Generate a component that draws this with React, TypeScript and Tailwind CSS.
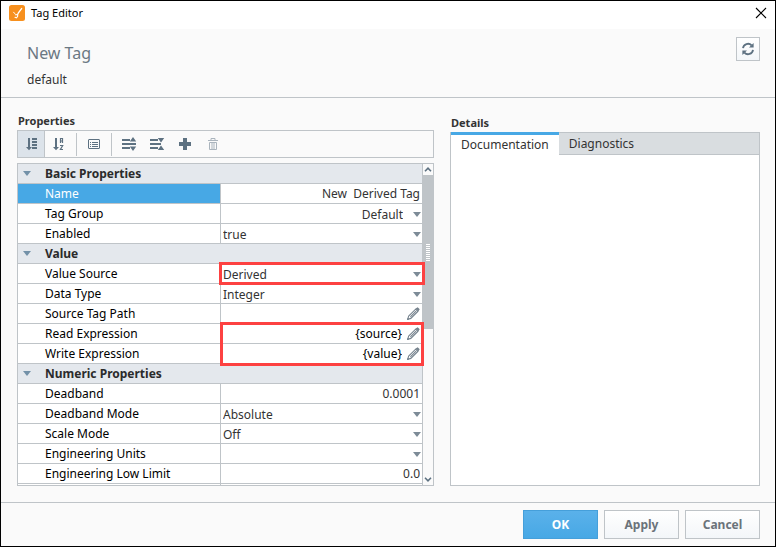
import React, { useState } from "react";
import clsx from "clsx";

type Kind = "text" | "select" | "expression";

interface Property {
  label: string;
  value: string;
  kind: Kind;
  alignRight?: boolean;
  highlight?: "single" | "double"; // number of rows the red frame covers
}

interface Section {
  title: string;
  properties: Property[];
}

const sections: Section[] = [
  {
    title: "Basic Properties",
    properties: [
      { label: "Name", value: "New  Derived Tag", kind: "text" },
      { label: "Tag Group", value: "Default", kind: "select", alignRight: true },
      { label: "Enabled", value: "true", kind: "select" },
    ],
  },
  {
    title: "Value",
    properties: [
      { label: "Value Source", value: "Derived", kind: "select", highlight: "single" },
      { label: "Data Type", value: "Integer", kind: "select" },
      { label: "Source Tag Path", value: "", kind: "expression" },
      { label: "Read Expression", value: "{source}", kind: "expression", highlight: "double" },
      { label: "Write Expression", value: "{value}", kind: "expression" },
    ],
  },
  {
    title: "Numeric Properties",
    properties: [
      { label: "Deadband", value: "0.0001", kind: "text" },
      { label: "Deadband Mode", value: "Absolute", kind: "select" },
      { label: "Scale Mode", value: "Off", kind: "select" },
      { label: "Engineering Units", value: "", kind: "select" },
      { label: "Engineering Low Limit", value: "0.0", kind: "text" },
    ],
  },
];

function Logo() {
  return (
    <svg width="16" height="16" viewBox="0 0 16 16" fill="none" stroke="#fff" strokeLinecap="round">
      <rect width="16" height="16" rx="2.5" fill="#f7901e" stroke="none" />
      <path d="M12.6 3.6 9.2 8.2" strokeWidth="1.4" />
      <path d="M9.2 8.2 8.2 9.6" strokeWidth="0.8" />
      <path d="M4.6 7.2 5.8 8.6" strokeWidth="1" />
      <path d="M6.4 9.8 8.8 9.6 8.6 11.6 7.4 12.8 6 12.2" strokeWidth="1.1" />
    </svg>
  );
}

function RefreshIcon() {
  return (
    <svg width="14" height="14" viewBox="0 0 14 14" fill="none" stroke="#5d7181" strokeWidth="1.8">
      <path d="M2 6.2A5 5 0 0 1 10.6 3.4" />
      <path d="M12 7.8A5 5 0 0 1 3.4 10.6" />
      <path d="M12.6 1v4.6H8z" fill="#5d7181" stroke="none" />
      <path d="M1.4 13V8.4H6z" fill="#5d7181" stroke="none" />
    </svg>
  );
}

function SortCategoryIcon() {
  return (
    <svg width="14" height="14" viewBox="0 0 14 14" fill="#5d7181">
      <path d="M4 1h2v9h2L5 13.2 2 10h2z" />
      <path d="M8 1h5v2H8zM8 4h5v2H8zM8 7h5v2H8zM8 10h5v2H8z" />
    </svg>
  );
}

function SortAlphaIcon() {
  return (
    <svg width="14" height="14" viewBox="0 0 14 14" fill="none" stroke="#5d7181">
      <path d="M3 1h2v9h2L4 13.2 1 10h2z" fill="#5d7181" stroke="none" />
      <path d="M8.5 6V1.5h2V6M8.5 4h2M8 8.5h2.7L8.4 12.5H11" strokeWidth="1.2" />
    </svg>
  );
}

function DescriptionIcon() {
  return (
    <svg width="12" height="12" viewBox="0 0 12 12" fill="none" stroke="#5d7181">
      <rect x="0.5" y="1.5" width="11" height="9" rx="0.5" />
      <path d="M2 4.5h1M4 4.5h6M2 6.5h1M4 6.5h6M2 8.5h1M4 8.5h6" />
    </svg>
  );
}

function ExpandIcon() {
  return (
    <svg width="16" height="14" viewBox="0 0 16 14" fill="#5d7181">
      <path d="M1 2h8v2H1zM1 6h14v2H1zM1 10h8v2H1z" />
      <path d="M12 0 15.2 4.5H8.8zM12 14 8.8 9.5h6.4z" />
    </svg>
  );
}

function CollapseIcon() {
  return (
    <svg width="16" height="14" viewBox="0 0 16 14" fill="#5d7181">
      <path d="M1 2h8v2H1zM1 6h11v2H1zM1 10h8v2H1z" />
      <path d="M12 5.5 8.8 1h6.4zM12 8.5 15.2 13H8.8z" />
    </svg>
  );
}

function PlusIcon() {
  return (
    <svg width="12" height="12" viewBox="0 0 12 12" fill="#5d7181">
      <path d="M4 0h4v4h4v4H8v4H4V8H0V4h4z" />
    </svg>
  );
}

function TrashIcon() {
  return (
    <svg width="12" height="14" viewBox="0 0 12 14" fill="none" stroke="#aab4bd">
      <path d="M1 3.5h10M4 3V1.5h4V3M2.5 5.5h7v7h-7zM5 6v6M7 6v6" />
    </svg>
  );
}

function PencilIcon() {
  return (
    <svg width="14" height="14" viewBox="0 0 14 14" fill="none" stroke="#74818c" strokeWidth="1.1">
      <path d="M2.6 9.2 9.6 2.2 11.8 4.4 4.8 11.4 1.8 12.2Z" />
      <path d="M4.4 9.8 10 4.2" />
      <path d="M10.4 1.8 11.6 1 13 2.4 12.2 3.6Z" fill="#74818c" />
      <path d="M1 13 1.6 10.8 3.2 12.4Z" fill="#74818c" stroke="none" />
    </svg>
  );
}

function ArrowDown({ className }: { className: string }) {
  return (
    <svg width="8" height="5" viewBox="0 0 8 5" className={className}>
      <path d="M0 0h8L4 5z" fill="currentColor" />
    </svg>
  );
}

function ToolButton({ label, active, disabled, children }: { label: string; active?: boolean; disabled?: boolean; children: React.ReactNode }) {
  return (
    <button
      type="button"
      aria-label={label}
      disabled={disabled}
      className={clsx("flex h-full items-center justify-center", active ? "w-[27px] border-r border-[#bfc4c8] bg-[#dce3ea]" : "w-7")}
    >
      {children}
    </button>
  );
}

function ValueCell({ property }: { property: Property }) {
  const { label, value, kind, alignRight, highlight } = property;
  const [current, setCurrent] = useState(value);

  return (
    <div className="relative flex h-full items-center">
      {kind === "select" ? (
        <>
          <select
            aria-label={label}
            value={current}
            onChange={(e) => setCurrent(e.target.value)}
            className={clsx("h-full w-full appearance-none pt-0.5 pl-0.5 text-[#333]", alignRight ? "pr-[19px] text-right" : "pr-4")}
          >
            <option value={value}>{value}</option>
          </select>
          <ArrowDown className="pointer-events-none absolute right-px mt-0.5 text-[#7d8b97]" />
        </>
      ) : (
        <input
          aria-label={label}
          value={current}
          onChange={(e) => setCurrent(e.target.value)}
          className={clsx("h-full w-full min-w-0 text-right", kind === "text" ? "pr-0.5 text-[#333]" : "pr-1 text-black")}
        />
      )}
      {kind === "expression" && (
        <button type="button" aria-label={`Edit ${label}`} className="mr-0.5 shrink-0">
          <PencilIcon />
        </button>
      )}
      {highlight && (
        <div
          className={clsx(
            "pointer-events-none absolute z-10 border-3 border-[#fd4141]",
            highlight === "single" ? "-top-0.5 -right-[3px] -bottom-0.5 -left-0.5" : "-top-0.5 -right-0.5 -bottom-[23px] -left-px"
          )}
        />
      )}
    </div>
  );
}

function PropertyTable() {
  const [selected, setSelected] = useState("Name");

  return (
    <table className="w-full table-fixed border-separate border-spacing-0 self-start">
      <colgroup>
        <col />
        <col className="w-[202px]" />
      </colgroup>
      {sections.map((section) => (
        <tbody key={section.title}>
          <tr className="h-5">
            <th colSpan={2} className="h-5 border-r border-b border-[#bfc4c8] bg-[#e4e8ed] p-0 text-left text-[#2b2b2b]">
              <div className="flex items-center">
                <ArrowDown className="ml-[5px] text-[#7391a8]" />
                <span className="ml-3.5">{section.title}</span>
              </div>
            </th>
          </tr>
          {section.properties.map((property) => (
            <tr key={property.label} className="h-5" onClick={() => setSelected(property.label)}>
              <th
                scope="row"
                className={clsx(
                  "h-5 border-r border-b border-[#bfc4c8] p-0 pl-[27px] text-left font-normal",
                  selected === property.label ? "bg-[#47a8e5] text-white" : "bg-white text-black"
                )}
              >
                {property.label}
              </th>
              <td className="h-5 border-r border-b border-[#bfc4c8] bg-white p-0">
                <div className="h-[19px]">
                  <ValueCell property={property} />
                </div>
              </td>
            </tr>
          ))}
        </tbody>
      ))}
      {/* Empty row that runs out of the visible area */}
      <tbody>
        <tr className="h-5">
          <td className="border-r border-[#bfc4c8] bg-white p-0" />
          <td className="border-r border-[#bfc4c8] bg-white p-0" />
        </tr>
      </tbody>
    </table>
  );
}

function Scrollbar() {
  return (
    <div className="flex w-2.5 shrink-0 flex-col bg-[#fafafa]">
      <button type="button" aria-label="Scroll up" className="flex h-[11px] items-center justify-center bg-[#fafafa]">
        <svg width="8" height="5" viewBox="0 0 8 5" fill="none" stroke="#5d7181" strokeWidth="1.6">
          <path d="M1 4.2 4 1.2l3 3" />
        </svg>
      </button>
      <div className="flex h-[154px] items-center justify-center bg-[#bfc4c8]">
        <div className="flex flex-col gap-px">
          {Array.from({ length: 9 }, (_, i) => (
            <span key={i} className="block h-px w-1 bg-white" />
          ))}
        </div>
      </div>
      <button type="button" aria-label="Scroll down" className="mt-auto flex h-[11px] items-center justify-center">
        <svg width="8" height="5" viewBox="0 0 8 5" fill="none" stroke="#5d7181" strokeWidth="1.6">
          <path d="M1 0.8 4 3.8l3-3" />
        </svg>
      </button>
    </div>
  );
}

function FooterButton({ primary, children }: { primary?: boolean; children: React.ReactNode }) {
  return (
    <button
      type="button"
      className={clsx(
        "h-[29px] w-[75px] border text-xs font-bold",
        primary
          ? "border-[#459fda] bg-linear-to-b from-[#5ab1ea] to-[#47a8e5] text-white"
          : "border-[#bfc4c8] bg-linear-to-b from-white to-[#f3f6f9] text-[#6b737a]"
      )}
    >
      {children}
    </button>
  );
}

export default function App() {
  const [tab, setTab] = useState("Documentation");

  return (
    <div className="flex h-screen flex-col border border-black bg-[#fafafa] font-['Noto_Sans',sans-serif] text-xs text-[#333]">
      {/* Title bar */}
      <div className="flex h-7 shrink-0 items-center bg-white px-2 pb-1 text-black">
        <Logo />
        <span className="ml-1.5 text-[11px]">Tag Editor</span>
        <button type="button" aria-label="Close" className="ml-auto">
          <svg width="12" height="12" viewBox="0 0 12 12" fill="none" stroke="#000" strokeWidth="1.1">
            <path d="M1 1l10 10M11 1 1 11" />
          </svg>
        </button>
      </div>

      {/* Header */}
      <header className="flex h-[69px] shrink-0 items-start justify-between border-b border-[#bfc4c8] pt-2 pr-[15px] pl-[26px]">
        <div className="pt-1">
          <h1 className="text-base leading-6 text-[#6b7883]">New Tag</h1>
          <p className="mt-1 leading-[22px]">default</p>
        </div>
        <button type="button" aria-label="Refresh" className="flex size-6 items-center justify-center border border-[#bfc4c8] bg-linear-to-b from-white to-[#f3f6f9]">
          <RefreshIcon />
        </button>
      </header>

      <main className="flex min-h-0 flex-1 gap-4 pt-[15px] pr-[15px] pb-4 pl-4">
        {/* Properties */}
        <section className="flex w-[417px] shrink-0 flex-col">
          <h2 className="pl-px text-[11px] leading-4 font-bold">Properties</h2>
          <div className="mt-px flex h-7 shrink-0 items-center border border-[#bfc4c8]">
            <ToolButton label="Sort by category" active><SortCategoryIcon /></ToolButton>
            <ToolButton label="Sort alphabetically"><SortAlphaIcon /></ToolButton>
            <span className="mx-[3px] h-[23px] w-px bg-[#bfc4c8]" />
            <ToolButton label="Show description"><DescriptionIcon /></ToolButton>
            <span className="mx-[3px] h-[23px] w-px bg-[#bfc4c8]" />
            <ToolButton label="Expand all"><ExpandIcon /></ToolButton>
            <ToolButton label="Collapse all"><CollapseIcon /></ToolButton>
            <ToolButton label="Add property"><PlusIcon /></ToolButton>
            <ToolButton label="Delete property" disabled><TrashIcon /></ToolButton>
          </div>
          <div className="mt-[5px] flex min-h-0 flex-1 overflow-hidden border border-[#bfc4c8]">
            <PropertyTable />
            <Scrollbar />
          </div>
        </section>

        {/* Details */}
        <section className="flex min-w-0 flex-1 flex-col pt-0.5">
          <h2 className="pl-px text-[11px] leading-4 font-bold">Details</h2>
          <div className="mt-px flex flex-1 flex-col border border-[#bfc4c8] bg-white">
            <div role="tablist" className="flex h-[22px] bg-[#d9dde0]">
              {["Documentation", "Diagnostics"].map((name) => (
                <button
                  key={name}
                  type="button"
                  role="tab"
                  aria-selected={tab === name}
                  onClick={() => setTab(name)}
                  className={clsx(
                    "px-2.5 leading-5",
                    tab === name ? "-mt-px border-t-3 border-[#47a8e5] bg-white" : "border-b border-[#bfc4c8]"
                  )}
                >
                  {name}
                </button>
              ))}
              <span className="flex-1 border-b border-[#bfc4c8]" />
            </div>
          </div>
        </section>
      </main>

      <footer className="flex shrink-0 justify-end gap-1.5 border-t border-[#bfc4c8] px-[15px] py-[7px]">
        <FooterButton primary>OK</FooterButton>
        <FooterButton>Apply</FooterButton>
        <FooterButton>Cancel</FooterButton>
      </footer>
    </div>
  );
}
